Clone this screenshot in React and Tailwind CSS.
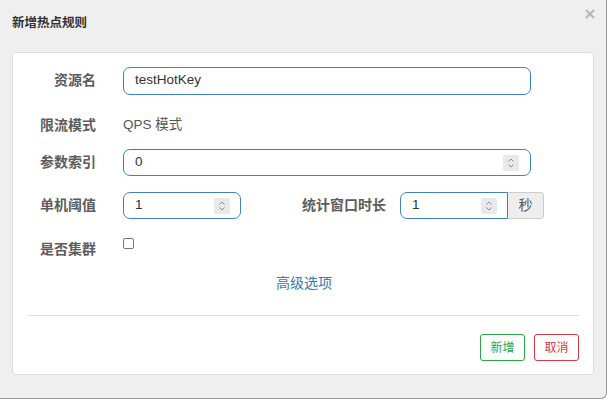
import React from 'react';

const font = { fontFamily: '"Liberation Sans", "Noto Sans CJK SC", sans-serif' };

function Spinner() {
  return (
    <div className="w-[16px] h-[16px] bg-[#e9e9ed] rounded-[2px] flex items-center justify-center">
      <svg width="8" height="12" viewBox="0 0 8 12" fill="none" stroke="#8a8a8a" strokeWidth="1">
        <path d="M1.5 4.5 L4 2 L6.5 4.5" />
        <path d="M1.5 7.5 L4 10 L6.5 7.5" />
      </svg>
    </div>
  );
}

function Label({ children, className = '' }) {
  return (
    <div className={`w-[83px] shrink-0 text-right text-[14px] font-bold text-[#5c5c5c] ${className}`}>
      {children}
    </div>
  );
}

export default function App() {
  return (
    <div className="w-[608px] h-[400px] bg-white" style={font}>
      <div className="w-[607px] h-[399px] bg-[#efefef] border-r border-b border-[#9a9a9a] rounded-br-[6px] flex flex-col">
        {/* header */}
        <div className="h-[52px] flex items-start justify-between pl-[12px] pr-[11px]">
          <div className="mt-[15px] text-[12.5px] font-bold text-[#333] leading-[16px]">新增热点规则</div>
          <svg className="mt-[9px]" width="10" height="10" viewBox="0 0 10 10" stroke="#b5b5b5" strokeWidth="2">
            <path d="M1 1 L9 9 M9 1 L1 9" />
          </svg>
        </div>

        {/* body */}
        <div className="ml-[12px] w-[582px] h-[323px] bg-white border border-[#dcdcdc] rounded-[4px] flex flex-col">
          <div className="mt-[14px] flex items-center h-[27px]">
            <Label>资源名</Label>
            <div className="ml-[27px] w-[408px] h-[28px] border border-[#3e82c4] rounded-[7px] flex items-center pl-[11px] text-[13.5px] text-[#333]">
              testHotKey
            </div>
          </div>

          <div className="mt-[16px] flex items-center h-[27px] pt-[3px]">
            <Label>限流模式</Label>
            <div className="ml-[27px] text-[13.5px] text-[#555]">QPS 模式</div>
          </div>

          <div className="mt-[12px] flex items-center h-[27px]">
            <Label>参数索引</Label>
            <div className="ml-[27px] w-[408px] h-[27px] border border-[#3e82c4] rounded-[7px] flex items-center justify-between pl-[11px] pr-[11px] text-[13.5px] text-[#333]">
              <span>0</span>
              <Spinner />
            </div>
          </div>

          <div className="mt-[16px] flex items-center h-[27px]">
            <Label>单机阈值</Label>
            <div className="ml-[27px] w-[118px] h-[27px] border border-[#3e82c4] rounded-[7px] flex items-center justify-between pl-[11px] pr-[10px] text-[13.5px] text-[#333]">
              <span>1</span>
              <Spinner />
            </div>
            <div className="w-[145px] text-right text-[14px] font-bold text-[#5c5c5c]">统计窗口时长</div>
            <div className="ml-[14px] flex h-[27px]">
              <div className="w-[108px] border border-[#3e82c4] rounded-l-[7px] flex items-center justify-between pl-[11px] pr-[10px] text-[13.5px] text-[#333]">
                <span>1</span>
                <Spinner />
              </div>
              <div className="w-[36px] bg-[#eeeeee] border border-l-0 border-[#cccccc] rounded-r-[4px] flex items-center justify-center text-[14px] text-[#555]">
                秒
              </div>
            </div>
          </div>

          <div className="mt-[17px] flex items-start h-[27px]">
            <Label className="leading-[27px]">是否集群</Label>
            <div className="ml-[27px] mt-[2px] w-[11px] h-[11px] border border-[#767676] rounded-[2px] bg-white"></div>
          </div>

          <div className="mt-[10px] text-center text-[14px] text-[#337ab7] leading-[20px] pl-[2px]">高级选项</div>

          <div className="mt-[22px] mx-[14px] border-t border-[#e0e0e0]"></div>

          <div className="mt-[18px] flex justify-end gap-[9px] pr-[14px]">
            <button className="w-[45px] h-[27px] border border-[#28a745] rounded-[3px] text-[12px] text-[#28a745] bg-white">新增</button>
            <button className="w-[45px] h-[27px] border border-[#dc3545] rounded-[3px] text-[12px] text-[#dc3545] bg-white">取消</button>
          </div>
        </div>
      </div>
    </div>
  );
}
